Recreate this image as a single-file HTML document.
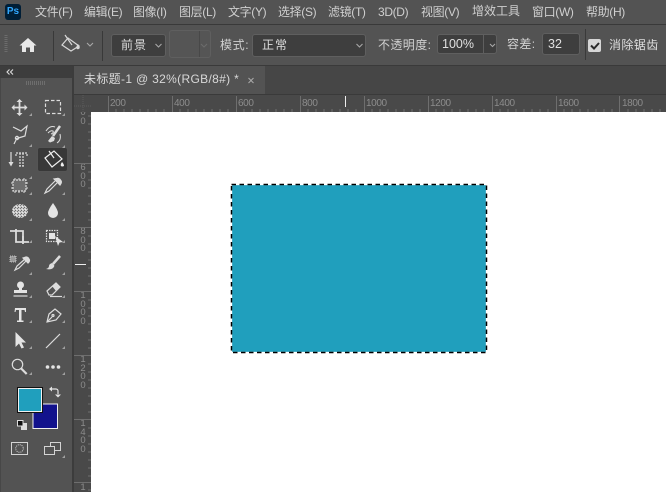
<!DOCTYPE html>
<html><head><meta charset="utf-8">
<style>
html,body{margin:0;padding:0;background:#fff}
#r{position:relative;width:666px;height:492px;overflow:hidden;background:#fff;font-family:"Liberation Sans","Noto Sans CJK SC",sans-serif;color:#d4d4d4}
#r div{position:absolute;box-sizing:border-box}
.m{top:3px;font-size:12px;line-height:18px;white-space:nowrap;color:#cfcfcf;letter-spacing:-.35px}
.o{font-size:12px;line-height:16px;white-space:nowrap;color:#d0d0d0}
.b{background:#3e3e3e;border:1px solid #5f5f5f;border-radius:3px}
.t{top:98px;font-size:10px;line-height:12px;color:#8c8c8c;letter-spacing:-.4px}
.v{left:79px;width:8px;font-size:9.5px;line-height:8.7px;color:#8c8c8c;text-align:center}
svg{position:absolute;left:0;top:0}
</style></head><body><div id="r">
<div style="left:0;top:0;width:666px;height:24px;background:#535353"></div>
<div style="left:0;top:24px;width:666px;height:1px;background:#393939"></div>
<div style="left:0;top:25px;width:666px;height:40px;background:#535353"></div>
<div style="left:0;top:65px;width:666px;height:1px;background:#3a3a3a"></div>
<div style="left:0;top:66px;width:666px;height:29px;background:#464646"></div>
<div style="left:0;top:66px;width:72px;height:426px;background:#535353"></div>
<div style="left:0;top:66px;width:72px;height:12px;background:#3d3d3d"></div>
<div style="left:0;top:78px;width:1px;height:414px;background:#474747"></div>
<div style="left:72px;top:66px;width:2px;height:426px;background:#3c3c3c"></div>
<div style="left:74px;top:66px;width:191px;height:28px;background:#535353"></div>
<div style="left:74px;top:94px;width:592px;height:1px;background:#3a3a3a"></div>
<div style="left:74px;top:95px;width:592px;height:17px;background:#494949"></div>
<div style="left:74px;top:95px;width:17px;height:397px;background:#494949"></div>
<div style="left:91px;top:112px;width:575px;height:380px;background:#fff"></div>

<div style="left:5px;top:4px;width:16px;height:16px;background:#001e36;border-radius:3px;color:#31a8ff;font-size:10px;line-height:16px;text-align:center;font-weight:bold">Ps</div>
<div class="m" style="left:35px">文件(F)</div>
<div class="m" style="left:84px">编辑(E)</div>
<div class="m" style="left:133px">图像(I)</div>
<div class="m" style="left:179px">图层(L)</div>
<div class="m" style="left:228px">文字(Y)</div>
<div class="m" style="left:278px">选择(S)</div>
<div class="m" style="left:328px">滤镜(T)</div>
<div class="m" style="left:378px">3D(D)</div>
<div class="m" style="left:421px">视图(V)</div>
<div class="m" style="left:472px;top:2px;letter-spacing:0">增效工具</div>
<div class="m" style="left:532px">窗口(W)</div>
<div class="m" style="left:586px">帮助(H)</div>

<div class="b" style="left:111px;top:34px;width:55px;height:23px"></div>
<div class="o" style="left:121px;top:37px;letter-spacing:1px;color:#ddd">前景</div>
<div style="left:169px;top:30px;width:42px;height:28px;background:#555;border:1px solid #5f5f5f;border-radius:3px"></div>
<div style="left:199px;top:31px;width:1px;height:26px;background:#484848"></div>
<div class="o" style="left:220px;top:37px;letter-spacing:.6px">模式:</div>
<div class="b" style="left:252px;top:34px;width:114px;height:23px"></div>
<div class="o" style="left:262px;top:37px;letter-spacing:1px;color:#ddd">正常</div>
<div class="o" style="left:378px;top:37px;letter-spacing:.4px">不透明度:</div>
<div class="b" style="left:437px;top:34px;width:60px;height:20px"></div>
<div style="left:483px;top:35px;width:1px;height:18px;background:#5f5f5f"></div>
<div class="o" style="left:442px;top:36px;color:#e0e0e0;font-size:12.5px">100%</div>
<div class="o" style="left:507px;top:36px;letter-spacing:.4px">容差:</div>
<div class="b" style="left:542px;top:33px;width:38px;height:22px"></div>
<div class="o" style="left:548px;top:36px;color:#e0e0e0;font-size:12.5px">32</div>
<div style="left:585px;top:29px;width:1px;height:31px;background:#3a3a3a"></div>
<div style="left:588px;top:39px;width:13px;height:13px;background:#d6d6d6;border-radius:2px"></div>
<div class="o" style="left:609px;top:37px;letter-spacing:.4px;color:#ddd">消除锯齿</div>

<div style="left:84px;top:71px;font-size:12px;line-height:16px;white-space:nowrap;color:#d8d8d8;letter-spacing:.33px">未标题-1 @ 32%(RGB/8#) *</div>

<div class="t" style="left:110px">200</div>
<div class="t" style="left:174px">400</div>
<div class="t" style="left:238px">600</div>
<div class="t" style="left:302px">800</div>
<div class="t" style="left:366px">1000</div>
<div class="t" style="left:430px">1200</div>
<div class="t" style="left:494px">1400</div>
<div class="t" style="left:558px">1600</div>
<div class="t" style="left:622px">1800</div>

<div class="v" style="top:109px;clip-path:inset(3px 0 0 0)">0<br>0</div>
<div class="v" style="top:164px">6<br>0<br>0</div>
<div class="v" style="top:228px">8<br>0<br>0</div>
<div class="v" style="top:292px">1<br>0<br>0<br>0</div>
<div class="v" style="top:356px">1<br>2<br>0<br>0</div>
<div class="v" style="top:420px">1<br>4<br>0<br>0</div>
<div class="v" style="top:484px">1</div>

<div style="left:37px;top:147px;width:31px;height:25px;background:#383838;border:1px solid #555;border-radius:3px"></div>
<div style="left:232px;top:185px;width:254px;height:167px;background:#209fbd"></div>

<svg width="666" height="492" viewBox="0 0 666 492" fill="none">
 <defs>
  <pattern id="sp" width="3" height="3" patternUnits="userSpaceOnUse">
   <rect width="3" height="3" fill="#c8c8c8"/><rect x="0" y="0" width="1" height="1" fill="#6a6a6a"/><rect x="2" y="1" width="1" height="1" fill="#7a7a7a"/><rect x="1" y="2" width="1" height="1" fill="#e8e8e8"/>
  </pattern>
 </defs>
 <!-- marching ants -->
 <rect x="231.500" y="184.500" width="255" height="168" stroke="#fff" stroke-width="1.300"/>
 <rect x="231.500" y="184.500" width="255" height="168" stroke="#000" stroke-width="1.500" stroke-dasharray="4.500 3.500"/>
 <!-- grips -->
 <path d="M6 35v18" stroke="#6c6c6c" stroke-width="3" stroke-dasharray="1 1"/>
 <path d="M26 83h19" stroke="#6e6e6e" stroke-width="4" stroke-dasharray="1 1"/>
 <!-- collapse -->
 <path d="M9.500 69.500l-2.500 2.500 2.500 2.500M13 69.500l-2.500 2.500 2.500 2.500" stroke="#ddd" stroke-width="1.100"/>
 <!-- options separators -->
 <path d="M53.500 31v30M102.500 31v30" stroke="#393939"/>
 <!-- home -->
 <path d="M28 38l-8.500 7.500H22V52h4v-4.500h4V52h4v-6.500h2.500z" fill="#e8e8e8"/>
 <!-- bucket option -->
 <g stroke="#d8d8d8" stroke-width="1.200"><path d="M62 45l6-7 11 8-8 5z"/><path d="M65 35l7 10"/></g>
 <path d="M78 44q-2.500 3-1.500 4.500t3 0q1-1.500-1.500-4.500z" fill="#d8d8d8"/>
 <!-- chevrons -->
 <g stroke="#a8a8a8" stroke-width="1.100">
  <path d="M87 43l3 3 3-3"/><path d="M155.500 44l3 3 3-3"/><path d="M356.500 44l3 3 3-3"/><path d="M490 44l2.500 2.500 2.500-2.500"/>
 </g>
 <path d="M201 44l3 3 3-3" stroke="#6c6c6c" stroke-width="1.100"/>
 <!-- checkbox -->
 <path d="M591 45.500l3 3 5-5.500" stroke="#2a2a2a" stroke-width="2"/>
 <!-- tab close -->
 <path d="M248.500 78l5 5M253.500 78l-5 5" stroke="#aaa"/>
 <!-- ruler zero cross -->
 <path d="M83 95v17M74 106h17" stroke="#5a5a5a" stroke-dasharray="1 1"/>
 <!-- top ruler ticks -->
 <g stroke="#6e6e6e"><path d="M108.500 96v16M172.500 96v16M236.500 96v16M300.500 96v16M364.500 96v16M428.500 96v16M492.500 96v16M556.500 96v16M619.500 96v16"/>
 <path d="M116 109v3M124 109v3M132 109v3M140 109v3M148 109v3M156 109v3M164 109v3M180 109v3M188 109v3M196 109v3M204 109v3M212 109v3M220 109v3M228 109v3M244 109v3M252 109v3M260 109v3M268 109v3M276 109v3M284 109v3M292 109v3M308 109v3M316 109v3M324 109v3M332 109v3M340 109v3M348 109v3M356 109v3M372 109v3M380 109v3M388 109v3M396 109v3M404 109v3M412 109v3M420 109v3M436 109v3M444 109v3M452 109v3M460 109v3M468 109v3M476 109v3M484 109v3M500 109v3M508 109v3M516 109v3M524 109v3M532 109v3M540 109v3M548 109v3M564 109v3M572 109v3M580 109v3M588 109v3M596 109v3M604 109v3M612 109v3M628 109v3M636 109v3M644 109v3M652 109v3M660 109v3"/>
 <!-- left ruler ticks -->
 <path d="M74 163.500h17M74 227.500h17M74 291.500h17M74 355.500h17M74 419.500h17M74 482.500h17"/>
 <path d="M88 116h3M88 124h3M88 132h3M88 140h3M88 148h3M88 156h3M88 172h3M88 180h3M88 188h3M88 196h3M88 204h3M88 212h3M88 220h3M88 236h3M88 244h3M88 252h3M88 260h3M88 268h3M88 276h3M88 284h3M88 300h3M88 308h3M88 316h3M88 324h3M88 332h3M88 340h3M88 348h3M88 364h3M88 372h3M88 380h3M88 388h3M88 396h3M88 404h3M88 412h3M88 428h3M88 436h3M88 444h3M88 452h3M88 460h3M88 468h3M88 476h3M88 490h3"/></g>
 <!-- cursor markers -->
 <path d="M345.500 96v11M75 264.500h11" stroke="#eee"/>

 <!-- tools -->
 <g stroke="#dcdcdc" stroke-width="1.200">
  <!-- move -->
  <path d="M13.500 107.500h12M19.500 101.500v12" stroke-width="1.800"/>
  <path d="M19.500 99l-3 3h6zM19.500 116l-3-3h6zM11.500 107.500l3-3v6zM27.500 107.500l-3-3v6z" fill="#dcdcdc" stroke="none"/>
  <!-- marquee -->
  <rect x="45.500" y="100.500" width="15" height="13" stroke-dasharray="3.500 2"/>
  <!-- polygonal lasso -->
  <path d="M13 127l8 4 6-5-2 10-10 3"/>
  <circle cx="17" cy="138" r="1.600"/>
  <path d="M16 140l-2 4"/>
  <!-- quick select -->
  <path d="M46 131q4-6 9-4M48 133q3-3 5-2q1 2-2 3" stroke-width="1.100"/>
  <path d="M60 126l-7 10" stroke-width="2.500"/>
  <path d="M52 136l-4 5 2 1.500 4-1.500 1-3z" fill="#dcdcdc" stroke="none"/>
  <path d="M60 134q1.500 6-3 9" stroke-width="1"/>
  <!-- type mask -->
  <path d="M11 152v12"/><path d="M8.500 162l2.500 4.500 2.500-4.500z" fill="#dcdcdc" stroke="none"/>
  <path d="M16 153h11v3M16 156v-3M20 153v13h3v-13M19 166h5" stroke-dasharray="2 1"/>
  <!-- bucket -->
  <path d="M45 158l9-7 8 8-10 8z" stroke="#f0f0f0"/>
  <path d="M49 151l5 7" stroke="#f0f0f0"/>
  <path d="M62 162q-2 3-1 4t3 0q0-2-2-4z" fill="#f0f0f0" stroke="none"/>
  <!-- artboard/patch -->
  <rect x="13" y="180" width="13" height="11" fill="#6e6e6e" stroke-dasharray="2 1"/>
  <path d="M15 178v2M19 178v2M24 178v2M15 191v2M19 191v2M24 191v2M11 183h2M11 188h2M26 183h2M26 188h2" stroke-width="1"/>
  <!-- eyedropper -->
  <path d="M55 181l-8 8-2 4 4-2 8-8"/>
  <path d="M54 179l6 6 1-1.500q1-2-.5-3.500q-1.500-2-3.500-1.500z" fill="#dcdcdc"/>
  <!-- sponge -->
  <ellipse cx="20" cy="211" rx="8" ry="7" fill="url(#sp)" stroke="none"/>
  <!-- drop -->
  <path d="M53 203q-5 7-5 10a5 5 0 0 0 10 0q0-3-5-10z" fill="#e4e4e4" stroke="none"/>
  <!-- crop -->
  <path d="M10 231h13v11h6M16 229v13h7" stroke-width="1.800"/>
  <path d="M23 236v8" stroke-width="1.800"/>
  <!-- slice -->
  <rect x="46.500" y="230.500" width="11" height="11" stroke-dasharray="1.500 1"/>
  <rect x="49" y="233" width="6" height="6" fill="#e4e4e4" stroke="none"/>
  <path d="M55 236l8 6-3.500 .5-1.500 3.500z" fill="#e4e4e4" stroke="none"/>
  <!-- spot heal -->
  <rect x="10" y="256" width="6" height="6" fill="#999" stroke="#ddd" stroke-width=".8" stroke-dasharray="1 1"/>
  <path d="M25 259l-8 7-2 4 4-2 8-8"/>
  <path d="M23 258l5 5 1-1q1-2 0-3q-1-2-3-2z" fill="#dcdcdc"/>
  <!-- brush -->
  <path d="M60 256l-7 8" stroke-width="2.500"/>
  <path d="M52 263q-3 1-3 3t-3 3q5 1 7-1t1-3z" fill="#dcdcdc" stroke="none"/>
  <!-- stamp -->
  <circle cx="20.500" cy="285" r="3.500" fill="#e4e4e4" stroke="none"/>
  <path d="M19 287h3v3h-3zM14 290h13v3H14z" fill="#e4e4e4" stroke="none"/>
  <path d="M13.500 296h14"/>
  <!-- eraser -->
  <path d="M47 291l9-8 4 4-8 8h-3z"/><path d="M52 286l4 5 4-4-4-4z" fill="#dcdcdc" stroke="none"/>
  <path d="M50 296.500h12"/>
  <!-- T -->
  <path d="M15 308h11v4h-1l-.5-2h-3v10.500h2v1.500h-6.500v-1.500h2V310h-3l-.5 2h-1z" fill="#e4e4e4" stroke="none"/>
  <!-- pen -->
  <path d="M47 322l2-8 6-5 6 5-5 6z"/><path d="M47 322l5-5"/><circle cx="53" cy="315.500" r="1"/>
  <!-- arrow -->
  <path d="M15.500 332v15l3.500-3.500 2.500 5 2.500-1-2.500-5h4.500z" fill="#e4e4e4" stroke="none"/>
  <path d="M46 348l14-14"/>
  <!-- zoom -->
  <circle cx="17.500" cy="364.500" r="5.200"/><path d="M21.200 368.500l5.500 5.500" stroke-width="2.200"/>
  <!-- more -->
  <circle cx="47.500" cy="367" r="1.800" fill="#e4e4e4" stroke="none"/><circle cx="53" cy="367" r="1.800" fill="#e4e4e4" stroke="none"/><circle cx="58.500" cy="367" r="1.800" fill="#e4e4e4" stroke="none"/>
 </g>
 <!-- corner triangles -->
 <path fill="#a0a0a0" d="M32 116v-3l-3 3zM65 116v-3l-3 3zM32 147v-3l-3 3zM65 148v-3l-3 3zM32 179v-3l-3 3zM32 195v-3l-3 3zM65 195v-3l-3 3zM32 221v-3l-3 3zM65 221v-3l-3 3zM32 243v-3l-3 3zM65 243v-3l-3 3zM32 275v-3l-3 3zM65 275v-3l-3 3zM32 298v-3l-3 3zM65 298v-3l-3 3zM32 323v-3l-3 3zM65 323v-3l-3 3zM32 349v-3l-3 3zM65 349v-3l-3 3zM32 375v-3l-3 3zM65 375v-3l-3 3zM65 458v-3l-3 3z"/>
 <!-- colour swatches -->
 <rect x="33" y="404" width="24.500" height="24.500" fill="#12128c" stroke="#f0f0f0"/>
 <rect x="17" y="387" width="26" height="26" fill="#111"/>
 <rect x="18.500" y="388.500" width="23" height="23" fill="#209fbd" stroke="#f0f0f0"/>
 <path d="M52 389h4a2 2 0 0 1 2 2v3" stroke="#e4e4e4" stroke-width="1.200"/>
 <path d="M49 389l3-2.500v5zM58 397.500l-3-3h6z" fill="#e4e4e4"/>
 <rect x="21" y="423" width="6" height="7" fill="#ddd"/>
 <rect x="17.500" y="420.500" width="5.500" height="5.500" fill="#111" stroke="#ddd"/>
 <!-- quick mask -->
 <rect x="11.500" y="442.500" width="16" height="12" stroke="#d4d4d4"/>
 <circle cx="19.500" cy="448.500" r="3.800" stroke="#d4d4d4" stroke-dasharray="1 1"/>
 <!-- screen mode -->
 <rect x="50.500" y="442.500" width="10" height="8" stroke="#d4d4d4"/>
 <rect x="44.500" y="446.500" width="10" height="8" fill="#535353" stroke="#d4d4d4"/>
</svg>
</div></body></html>
